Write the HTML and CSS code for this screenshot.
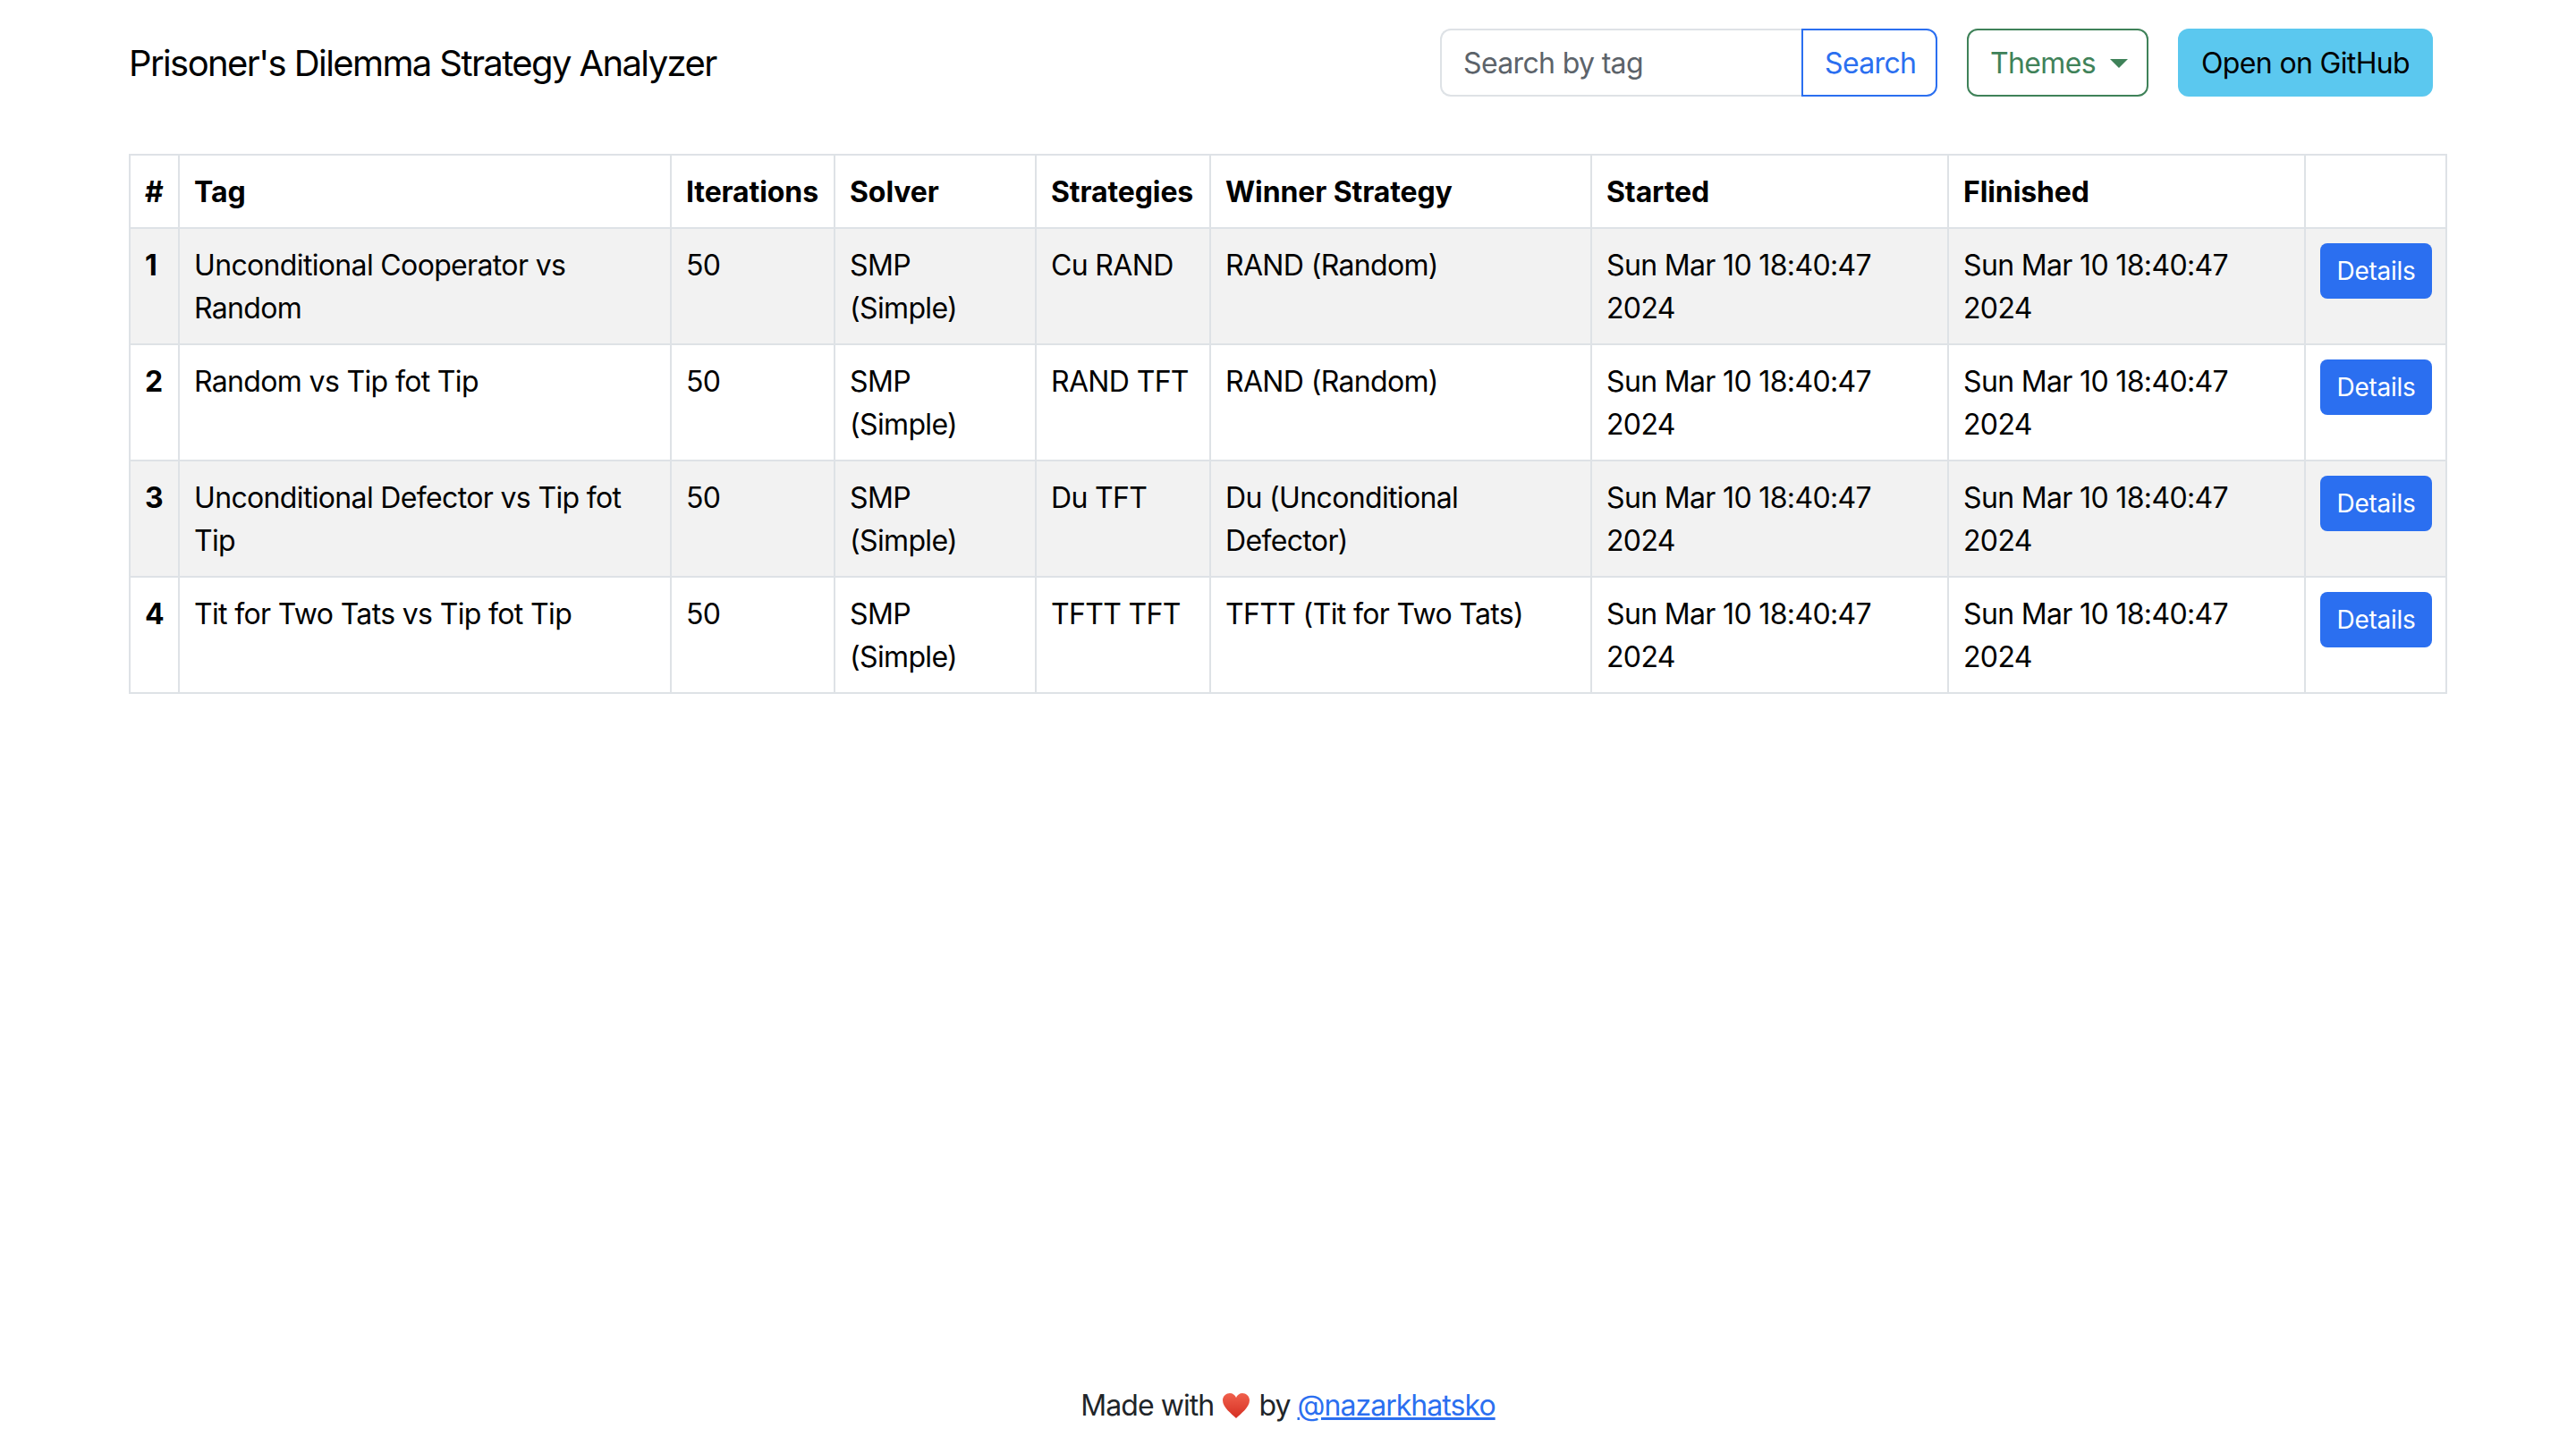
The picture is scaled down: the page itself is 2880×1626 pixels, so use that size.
FILE: index.html
```html
<!DOCTYPE html>
<html lang="en">
<head>
  <meta charset="UTF-8" />
  <title>Prisoner's Dilemma Strategy Analyzer</title>
  <link rel="stylesheet" href="styles.css">
</head>
<body>
  <nav class="navbar">
    <span class="brand">Prisoner's Dilemma Strategy Analyzer</span>
    <form class="search-form">
      <input type="text" class="search-input" placeholder="Search by tag">
      <button type="button" class="btn btn-search">Search</button>
    </form>
    <button type="button" class="btn btn-themes">Themes<span class="caret"></span></button>
    <a class="btn btn-github" href="#">Open on GitHub</a>
  </nav>

  <main class="content">
    <table class="results">
      <colgroup>
        <col class="col-num"><col class="col-tag"><col class="col-iter"><col class="col-solver"><col class="col-strat">
        <col class="col-winner"><col class="col-date"><col class="col-date"><col class="col-action">
      </colgroup>
      <thead>
        <tr>
          <th>#</th><th>Tag</th><th>Iterations</th><th>Solver</th><th>Strategies</th>
          <th>Winner Strategy</th><th>Started</th><th>Flinished</th><th></th>
        </tr>
      </thead>
      <tbody>
        <tr class="striped">
          <th>1</th><td>Unconditional Cooperator vs Random</td><td>50</td><td>SMP (Simple)</td><td>Cu RAND</td>
          <td>RAND (Random)</td><td>Sun Mar 10 18:40:47 2024</td><td>Sun Mar 10 18:40:47 2024</td>
          <td class="action"><button type="button" class="btn btn-details">Details</button></td>
        </tr>
        <tr>
          <th>2</th><td>Random vs Tip fot Tip</td><td>50</td><td>SMP (Simple)</td><td>RAND TFT</td>
          <td>RAND (Random)</td><td>Sun Mar 10 18:40:47 2024</td><td>Sun Mar 10 18:40:47 2024</td>
          <td class="action"><button type="button" class="btn btn-details">Details</button></td>
        </tr>
        <tr class="striped">
          <th>3</th><td>Unconditional Defector vs Tip fot Tip</td><td>50</td><td>SMP (Simple)</td><td>Du TFT</td>
          <td>Du (Unconditional Defector)</td><td>Sun Mar 10 18:40:47 2024</td><td>Sun Mar 10 18:40:47 2024</td>
          <td class="action"><button type="button" class="btn btn-details">Details</button></td>
        </tr>
        <tr>
          <th>4</th><td>Tit for Two Tats vs Tip fot Tip</td><td>50</td><td>SMP (Simple)</td><td>TFTT TFT</td>
          <td>TFTT (Tit for Two Tats)</td><td>Sun Mar 10 18:40:47 2024</td><td>Sun Mar 10 18:40:47 2024</td>
          <td class="action"><button type="button" class="btn btn-details">Details</button></td>
        </tr>
      </tbody>
    </table>
  </main>

  <footer class="footer">
    Made with
    <svg class="heart" viewBox="0 0 32 30" width="32" height="30">
      <defs>
        <linearGradient id="heartFill" x1="0" y1="0" x2="0" y2="1">
          <stop offset="0" stop-color="#f0604c"/>
          <stop offset="1" stop-color="#d52f22"/>
        </linearGradient>
      </defs>
      <path d="M16 29C11 24 1 17 1 9c0-5 4-8 8-8 3 0 6 2 7 5 1-3 4-5 7-5 4 0 8 3 8 8 0 8-10 15-15 20z" fill="url(#heartFill)"/>
    </svg>
    by <a href="#">@nazarkhatsko</a>
  </footer>
</body>
</html>
```

FILE: styles.css
```css
* {
  box-sizing: border-box;
}
body {
  margin: 0;
  min-height: 100vh;
  display: flex;
  flex-direction: column;
  font-family: Inter, "Liberation Sans", sans-serif;
  font-size: 32px;
  line-height: 48px;
  letter-spacing: -0.65px;
  color: #212529;
  background: #fff;
}
.navbar {
  display: flex;
  align-items: center;
  padding: 32px 160px 64px 144px;
}
.brand {
  font-size: 40px;
  letter-spacing: -1.6px;
  line-height: 52px;
  padding-top: 2px;
  color: #000;
  margin-right: auto;
}
.search-form {
  display: flex;
  margin-right: 33px;
}
.search-input {
  width: 404px;
  height: 76px;
  padding: 1px 24px 0;
  font: inherit;
  letter-spacing: inherit;
  color: #212529;
  border: 2px solid #dee2e6;
  border-right: 0;
  border-radius: 12px 0 0 12px;
  outline: none;
}
.search-input::placeholder {
  color: #5c636a;
}
.btn {
  display: inline-block;
  font: inherit;
  letter-spacing: inherit;
  height: 76px;
  padding: 13px 24px 11px;
  border: 2px solid transparent;
  border-radius: 12px;
  background: none;
  text-decoration: none;
  white-space: nowrap;
}
.btn-search {
  width: 152px;
  color: #2b6ff0;
  border-color: #2b6ff0;
  border-radius: 0 12px 12px 0;
}
.btn-themes {
  width: 203px;
  margin-right: 33px;
  color: #3f8259;
  border-color: #3f8259;
  text-align: left;
}
.caret {
  display: inline-block;
  margin-left: 16px;
  vertical-align: 6px;
  border-top: 10px solid;
  border-left: 10px solid transparent;
  border-right: 10px solid transparent;
}
.btn-github {
  width: 285px;
  text-align: center;
  color: #000;
  background: #5bc8ef;
}
.content {
  padding: 0 144px;
}
.results {
  width: 2592px;
  table-layout: fixed;
  border-collapse: collapse;
  color: #000;
}
.results th,
.results td {
  border: 2px solid #dee2e6;
  padding: 17px 16px 15px;
  text-align: left;
  vertical-align: top;
  font-weight: 400;
}
.results th {
  font-weight: 700;
  letter-spacing: -0.1px;
}
.results .action {
  padding-top: 16px;
  padding-bottom: 16px;
}
.striped th,
.striped td {
  background: #f2f2f2;
}
.col-num { width: 55px; }
.col-tag { width: 550px; }
.col-iter { width: 183px; }
.col-solver { width: 225px; }
.col-strat { width: 195px; }
.col-winner { width: 426px; }
.col-date { width: 399px; }
.col-action { width: 158px; }
.btn-details {
  height: 62px;
  width: 125px;
  padding: 0;
  font-size: 28px;
  line-height: 58px;
  letter-spacing: -0.3px;
  color: #fff;
  background: #2b6ff0;
  border-radius: 8px;
}
.footer {
  margin-top: auto;
  padding: 0 0 30px;
  text-align: center;
  letter-spacing: -0.95px;
}
.footer a {
  color: #2b6ff0;
}
.heart {
  vertical-align: -4px;
  margin: 0 1px;
}
```
